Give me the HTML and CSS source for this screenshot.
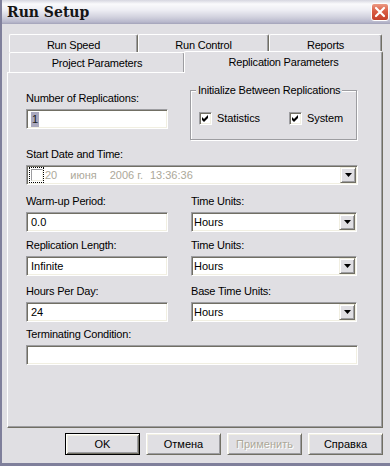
FILE: index.html
```html
<!DOCTYPE html>
<html>
<head>
<meta charset="utf-8">
<title>Run Setup</title>
<link rel="stylesheet" href="styles.css">
</head>
<body>
<div class="window">
  <div class="titlebar">
    <span class="title">Run Setup</span>
    <span class="close"><svg width="12" height="12" viewBox="0 0 12 12"><path d="M2 2 L10 10 M10 2 L2 10" stroke="#fff" stroke-width="2.2" stroke-linecap="round"/></svg></span>
  </div>
  <div class="client">
    <div class="tabs">
      <div class="tabrow back">
        <div class="tab tab-speed">Run Speed</div>
        <div class="tab tab-control">Run Control</div>
        <div class="tab tab-reports">Reports</div>
      </div>
      <div class="tabrow front">
        <div class="tab tab-project">Project Parameters</div>
        <div class="tab tab-repl">Replication Parameters</div>
      </div>
    </div>
    <div class="panel">
      <div class="row-top">
        <div class="field field-num">
          <span class="lbl">Number of Replications:</span>
          <div class="input"><span class="sel">1</span></div>
        </div>
        <div class="group">
          <span class="legend">Initialize Between Replications</span>
          <div class="check stats">
            <span class="box"><svg width="11" height="11" viewBox="0 0 11 11"><path d="M2 4 L4 6 L8 2 L8 5 L4 9 L2 7 Z" fill="#000"/></svg></span>
            <span>Statistics</span>
          </div>
          <div class="check">
            <span class="box"><svg width="11" height="11" viewBox="0 0 11 11"><path d="M2 4 L4 6 L8 2 L8 5 L4 9 L2 7 Z" fill="#000"/></svg></span>
            <span>System</span>
          </div>
        </div>
      </div>

      <div class="field row-date">
        <span class="lbl">Start Date and Time:</span>
        <div class="combo datepicker">
          <span class="dfocus"><span class="dbox"></span></span>
          <span class="dtext d-day">20</span>
          <span class="dtext d-mon">июня</span>
          <span class="dtext d-year">2006 г.</span>
          <span class="dtext d-time">13:36:36</span>
          <span class="ddbtn"><svg width="7" height="4" viewBox="0 0 7 4"><path d="M0 0H7L3.5 4Z" fill="#000"/></svg></span>
        </div>
      </div>

      <div class="grid2 row-warm">
        <div class="field">
          <span class="lbl">Warm-up Period:</span>
          <div class="input">0.0</div>
        </div>
        <div class="field">
          <span class="lbl">Time Units:</span>
          <div class="combo"><span class="ctext">Hours</span><span class="ddbtn"><svg width="7" height="4" viewBox="0 0 7 4"><path d="M0 0H7L3.5 4Z" fill="#000"/></svg></span></div>
        </div>
      </div>

      <div class="grid2 row-len">
        <div class="field">
          <span class="lbl">Replication Length:</span>
          <div class="input">Infinite</div>
        </div>
        <div class="field">
          <span class="lbl">Time Units:</span>
          <div class="combo"><span class="ctext">Hours</span><span class="ddbtn"><svg width="7" height="4" viewBox="0 0 7 4"><path d="M0 0H7L3.5 4Z" fill="#000"/></svg></span></div>
        </div>
      </div>

      <div class="grid2 row-hours">
        <div class="field">
          <span class="lbl">Hours Per Day:</span>
          <div class="input">24</div>
        </div>
        <div class="field">
          <span class="lbl">Base Time Units:</span>
          <div class="combo"><span class="ctext">Hours</span><span class="ddbtn"><svg width="7" height="4" viewBox="0 0 7 4"><path d="M0 0H7L3.5 4Z" fill="#000"/></svg></span></div>
        </div>
      </div>

      <div class="field row-term">
        <span class="lbl">Terminating Condition:</span>
        <div class="input"></div>
      </div>
    </div>
    <div class="buttons">
      <button class="btn default">OK</button>
      <button class="btn">Отмена</button>
      <button class="btn disabled">Применить</button>
      <button class="btn">Справка</button>
    </div>
  </div>
</div>
</body>
</html>
```
FILE: styles.css
```css
* { box-sizing: border-box; }
html, body { margin: 0; padding: 0; }
body {
  width: 390px;
  height: 466px;
  overflow: hidden;
  background: #e0dfe3;
  font-family: "Liberation Sans", Arial, sans-serif;
  font-size: 11px;
  color: #000;
}
.window {
  width: 390px;
  height: 466px;
  border-left: 2px solid #7f7f9b;
  border-bottom: 3px solid #7f7f9b;
  display: flex;
  flex-direction: column;
}
.titlebar {
  flex: none;
  height: 24px;
  display: flex;
  align-items: center;
  justify-content: space-between;
  padding: 0 1px 0 5px;
  background: linear-gradient(180deg, #d6d6e0 0px, #fafafc 4px, #eeeef4 10px, #d2d2de 17px, #b8b8cc 22px, #a2a2b8 24px);
}
.title {
  font-family: "DejaVu Serif", serif;
  font-weight: bold;
  font-size: 14px;
  color: #151515;
}
.close {
  width: 18px;
  height: 18px;
  border: 1px solid #fff;
  border-radius: 3px;
  background: linear-gradient(180deg, #ec9a84 0%, #d95c44 45%, #c4402a 100%);
  display: flex;
  align-items: center;
  justify-content: center;
}
.client {
  flex: 1;
  padding: 10px 7px 0 5px;
}
.tabs { padding-left: 2px; }
.tabrow { display: flex; }
.tabrow.back { height: 18px; }
.tabrow.front { height: 20px; align-items: flex-end; }
.tab {
  height: 100%;
  padding-top: 4px;
  line-height: 13px;
  text-align: center;
  letter-spacing: -0.2px;
  background: #e0dfe3;
  border-top: 1px solid #fff;
  border-left: 1px solid #fff;
  border-right: 1px solid #716f64;
  box-shadow: inset -1px 0 0 #9d9da1;
  border-radius: 2px 2px 0 0;
  white-space: nowrap;
}
.tab-speed { width: 129px; }
.tab-control { width: 131px; }
.tab-reports { width: 113px; }
.tab-project { width: 176px; }
.tab-repl {
  width: 199px;
  height: 22px;
  margin-left: -1px;
  margin-bottom: -1px;
  position: relative;
  z-index: 1;
}
.panel {
  width: 376px;
  height: 356px;
  border-top: 1px solid #fff;
  border-left: 1px solid #fff;
  border-right: 1px solid #716f64;
  border-bottom: 1px solid #716f64;
  box-shadow: inset -1px -1px 0 #9d9da1;
  padding: 17px 24px 0 18px;
}
.row-top { display: flex; align-items: flex-start; }
.field-num { width: 142px; margin-top: 2px; }
.lbl {
  display: block;
  height: 13px;
  line-height: 13px;
  margin-bottom: 4px;
  letter-spacing: -0.2px;
  white-space: nowrap;
}
.input {
  height: 20px;
  border: 1px solid;
  border-color: #9d9da1 #fff #fff #9d9da1;
  box-shadow: inset 1px 1px 0 #716f64, inset -1px -1px 0 #f1efe2;
  background: #fff;
  padding: 0 3px 0 4px;
  display: flex;
  align-items: center;
  line-height: 13px;
}
.sel {
  background: #aaa9bf;
  color: #1a1a1a;
  padding: 1px 1px;
  margin-left: 0;
}
.group {
  position: relative;
  width: 167px;
  height: 50px;
  margin-left: 22px;
  border: 1px solid #9d9da1;
  box-shadow: inset 1px 1px 0 #fff, 1px 1px 0 #fff;
  padding: 21px 0 0 8px;
  display: flex;
  align-items: flex-start;
}
.legend {
  position: absolute;
  top: -7px;
  left: 5px;
  padding: 0 2px;
  background: #e0dfe3;
  line-height: 13px;
  letter-spacing: -0.2px;
  white-space: nowrap;
}
.check {
  display: flex;
  align-items: center;
  gap: 5px;
  height: 13px;
  line-height: 13px;
  letter-spacing: -0.1px;
}
.check.stats { width: 90px; }
.box {
  width: 13px;
  height: 13px;
  flex: none;
  border: 1px solid;
  border-color: #9d9da1 #fff #fff #9d9da1;
  box-shadow: inset 1px 1px 0 #716f64, inset -1px -1px 0 #f1efe2;
  background: #fff;
  display: flex;
}
.box svg { display: block; }
.combo {
  height: 20px;
  border: 1px solid;
  border-color: #9d9da1 #fff #fff #9d9da1;
  box-shadow: inset 1px 1px 0 #716f64, inset -1px -1px 0 #f1efe2;
  background: #fff;
  padding: 0 1px 0 2px;
  display: flex;
  align-items: center;
  line-height: 13px;
}
.ctext { flex: 1; }
.ddbtn {
  width: 16px;
  height: 16px;
  flex: none;
  margin-left: auto;
  border: 1px solid;
  border-color: #f1efe2 #716f64 #716f64 #f1efe2;
  box-shadow: inset 1px 1px 0 #fff, inset -1px -1px 0 #9d9da1;
  background: #e0dfe3;
  display: flex;
  align-items: center;
  justify-content: center;
}
.ddbtn svg { display: block; }
.row-date { margin-top: 8px; }
.datepicker { padding-left: 2px; }
.dfocus {
  width: 15px;
  height: 16px;
  border: 1px dotted #000;
  display: flex;
  align-items: center;
  justify-content: center;
  flex: none;
}
.dbox {
  width: 12px;
  height: 12px;
  border: 1px solid;
  border-color: #9d9da1 #f1efe2 #f1efe2 #9d9da1;
  background: #fff;
}
.dtext { color: #aca899; white-space: nowrap; }
.d-day { margin-left: 1px; }
.d-mon { margin-left: 13px; }
.d-year { margin-left: 13px; }
.d-time { margin-left: 7px; }
.grid2 {
  display: grid;
  grid-template-columns: 142px 166px;
  column-gap: 23px;
}
.row-warm { margin-top: 10px; }
.row-len { margin-top: 7px; }
.row-hours { margin-top: 9px; }
.row-term { margin-top: 6px; }
.buttons {
  display: flex;
  justify-content: flex-end;
  gap: 6px;
  margin-top: 5px;
}
.btn {
  width: 75px;
  height: 22px;
  margin: 0;
  padding: 0;
  font-family: "Liberation Sans", Arial, sans-serif;
  font-size: 11px;
  color: #000;
  background: #e0dfe3;
  border: 1px solid;
  border-color: #fff #716f64 #716f64 #fff;
  box-shadow: inset 1px 1px 0 #f1efe2, inset -1px -1px 0 #9d9da1;
  border-radius: 0;
  display: flex;
  align-items: center;
  justify-content: center;
}
.btn.default {
  border: 1px solid #000;
  box-shadow: inset 1px 1px 0 #fff, inset -1px -1px 0 #716f64, inset 2px 2px 0 #f1efe2, inset -2px -2px 0 #9d9da1;
}
.btn.disabled {
  color: #aca899;
  text-shadow: 1px 1px 0 #fff;
}
```
